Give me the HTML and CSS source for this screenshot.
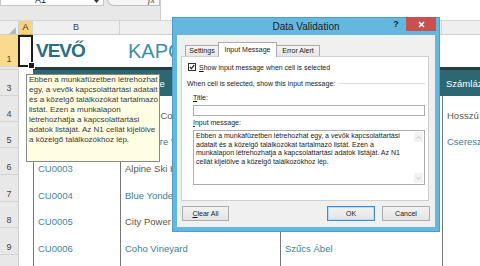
FILE: index.html
```html
<!DOCTYPE html>
<html lang="hu">
<head>
    <meta charset="UTF-8">
    <title>Data Validation</title>
    <link rel="stylesheet" href="styles.css">
</head>
<body>
<div class="app">

    <!-- Formula bar -->
    <div class="formula-bar">
        <div class="fb-left">
            <div class="fb-strip">
                <div class="name-box">
                    <span class="name">A1</span>
                    <svg class="caret" width="5" height="3" viewBox="0 0 5 3"><polygon points="0,0 5,0 2.5,3" fill="#333"/></svg>
                </div>
                <div class="fx-box"><span>fx</span></div>
            </div>
        </div>
        <div class="fb-input"></div>
    </div>

    <!-- Sheet -->
    <div class="sheet">
        <div class="row heads">
            <div class="corner"><svg width="7" height="7" viewBox="0 0 7 7"><polygon points="7,0 7,7 0,7" fill="#b8b8b8"/></svg></div>
            <div class="ch sel">A</div>
            <div class="ch">B</div>
            <div class="ch">C</div>
            <div class="ch">D</div>
            <div class="ch">E</div>
        </div>

        <div class="row r1">
            <div class="rh sel">1</div>
            <div class="cell a1"></div>
            <div class="cell title-main">VEVŐ</div>
            <div class="cell title-sub">KAPCSOLATTARTÓK</div>
            <div class="cell"></div>
            <div class="cell"></div>
        </div>

        <div class="row r2">
            <div class="rh"></div>
            <div class="cell"></div>
            <div class="cell band"></div>
            <div class="cell band"></div>
            <div class="cell band"></div>
            <div class="cell band"></div>
        </div>

        <div class="row r3">
            <div class="rh">3</div>
            <div class="cell"></div>
            <div class="cell th">Ügyfél-azonosító</div>
            <div class="cell th">Cég neve</div>
            <div class="cell th">Kapcsolattartó</div>
            <div class="cell th">Számlázási cím</div>
        </div>

        <div class="row data even">
            <div class="rh">4</div>
            <div class="cell"></div>
            <div class="cell">CU0001</div>
            <div class="cell">Adatum Corporation</div>
            <div class="cell">Kovács Anna</div>
            <div class="cell">Hosszú utca 12.</div>
        </div>
        <div class="row data odd">
            <div class="rh">5</div>
            <div class="cell"></div>
            <div class="cell">CU0002</div>
            <div class="cell">Adventure Works</div>
            <div class="cell">Nagy Péter</div>
            <div class="cell">Cseresznyés u. 4.</div>
        </div>
        <div class="row data even tall">
            <div class="rh">6</div>
            <div class="cell"></div>
            <div class="cell">CU0003</div>
            <div class="cell">Alpine Ski House</div>
            <div class="cell">Tóth Eszter</div>
            <div class="cell"></div>
        </div>
        <div class="row data odd tall">
            <div class="rh">7</div>
            <div class="cell"></div>
            <div class="cell">CU0004</div>
            <div class="cell">Blue Yonder Airlines</div>
            <div class="cell">Szabó Gábor</div>
            <div class="cell"></div>
        </div>
        <div class="row data even">
            <div class="rh">8</div>
            <div class="cell"></div>
            <div class="cell">CU0005</div>
            <div class="cell">City Power &amp; Light</div>
            <div class="cell">Varga Júlia</div>
            <div class="cell"></div>
        </div>
        <div class="row data odd tall">
            <div class="rh">9</div>
            <div class="cell"></div>
            <div class="cell">CU0006</div>
            <div class="cell">Coho Vineyard</div>
            <div class="cell">Szűcs Ábel</div>
            <div class="cell"></div>
        </div>
        <div class="row data even tall">
            <div class="rh">10</div>
            <div class="cell"></div>
            <div class="cell"></div>
            <div class="cell"></div>
            <div class="cell"></div>
            <div class="cell"></div>
        </div>
    </div>

    <!-- Input message tooltip for A1 -->
    <div class="tooltip">
        Ebben a munkafüzetben létrehozhat<br>
        egy, a vevők kapcsolattartási adatait<br>
        és a közelgő találkozókat tartalmazó<br>
        listát. Ezen a munkalapon<br>
        létrehozhatja a kapcsolattartási<br>
        adatok listáját. Az N1 cellát kijelölve<br>
        a közelgő találkozókhoz lép.
    </div>

    <!-- Data Validation dialog -->
    <div class="dialog">
        <div class="dlg-title">
            <span>Data Validation</span>
            <div class="dlg-ctrls">
                <span class="help">?</span>
                <span class="close">
                    <svg width="7" height="7" viewBox="0 0 7 7"><path d="M1 1 L6 6 M6 1 L1 6" stroke="#fff" stroke-width="1.6"/></svg>
                </span>
            </div>
        </div>

        <div class="dlg-body">
            <div class="tabs">
                <div class="tab tab-settings">Settings</div>
                <div class="tab tab-input active">Input Message</div>
                <div class="tab tab-error">Error Alert</div>
            </div>

            <div class="panel">
                <div class="check-row">
                    <span class="checkbox">
                        <svg width="6" height="6" viewBox="0 0 6 6"><path d="M0.8 3 L2.4 4.6 L5.3 1" fill="none" stroke="#222" stroke-width="1.2"/></svg>
                    </span>
                    <span><u>S</u>how input message when cell is selected</span>
                </div>

                <div class="group-row">
                    <span>When cell is selected, show this input message:</span>
                    <span class="group-line"></span>
                </div>

                <div class="field-label"><u>T</u>itle:</div>
                <div class="field-input"></div>

                <div class="field-label"><u>I</u>nput message:</div>
                <div class="field-area">
                    <div class="area-text">
                        Ebben a munkafüzetben létrehozhat egy, a vevők kapcsolattartási<br>
                        adatait és a közelgő találkozókat tartalmazó listát. Ezen a<br>
                        munkalapon létrehozhatja a kapcsolattartási adatok listáját. Az N1<br>
                        cellát kijelölve a közelgő találkozókhoz lép.
                    </div>
                    <div class="scrollbar">
                        <span class="arrow"><svg width="5" height="3" viewBox="0 0 5 3"><path d="M0.5 2.7 L2.5 0.7 L4.5 2.7" fill="none" stroke="#bdbdbd" stroke-width="0.9"/></svg></span>
                        <span class="arrow"><svg width="5" height="3" viewBox="0 0 5 3"><path d="M0.5 0.3 L2.5 2.3 L4.5 0.3" fill="none" stroke="#bdbdbd" stroke-width="0.9"/></svg></span>
                    </div>
                </div>
            </div>

            <div class="buttons">
                <div class="btn"><u>C</u>lear All</div>
                <div class="btn default">OK</div>
                <div class="btn">Cancel</div>
            </div>
        </div>
    </div>

</div>
</body>
</html>
```

FILE: styles.css
```css
/* Reset */
* {
    margin: 0;
    padding: 0;
    box-sizing: border-box;
}

body {
    font-family: "Liberation Sans", Arial, sans-serif;
    background-color: #fff;
    color: #222;
    overflow: hidden;
}

.app {
    position: relative;
    width: 480px;
    height: 266px;
    overflow: hidden;
}

/* Formula bar */
.formula-bar {
    display: flex;
    height: 21px;
    border-bottom: 1px solid #d6d6d6;
}

.fb-left {
    width: 161px;
    background-color: #e8e8e8;
    border-right: 1px solid #cacaca;
}

.fb-strip {
    display: flex;
    align-items: flex-end;
    height: 6px;
    overflow: hidden;
}

.name-box {
    display: flex;
    align-items: flex-end;
    width: 104px;
    height: 18px;
    background-color: #fff;
    border: 1px solid #c6c6c6;
    border-top: none;
    font-size: 9px;
    line-height: 10px;
    color: #222;
}

.name {
    flex: 1;
    text-align: center;
    padding-right: 14px;
}

.caret {
    margin: 0 4px 2px 0;
}

.fx-box {
    flex: 1;
    height: 18px;
    margin-left: 3px;
    display: flex;
    align-items: flex-end;
    justify-content: flex-end;
    padding: 0 4px 0 0;
    background-color: #f6f6f6;
    border: 1px solid #bdbdbd;
    border-top: none;
    border-radius: 0 0 0 7px;
    font-family: "Liberation Serif", serif;
    font-style: italic;
    font-size: 10px;
    line-height: 10px;
    color: #555;
}

.fb-input {
    flex: 1;
    background-color: #fff;
}

/* Sheet grid */
.sheet {
    width: 600px;
}

.row {
    display: grid;
    grid-template-columns: 19px 14px 87px 160px 162px 158px;
    height: 26px;
}

.row.tall {
    height: 27px;
}

.heads {
    height: 14px;
    background-color: #efefef;
    border-bottom: 1px solid #cfcfcf;
}

.corner {
    display: flex;
    align-items: flex-end;
    justify-content: flex-end;
    padding: 0 2px 1px 0;
    border-right: 1px solid #cfcfcf;
}

.ch {
    border-right: 1px solid #d3d3d3;
    font-size: 9px;
    line-height: 13px;
    text-align: center;
    color: #444;
}

.ch.sel {
    background-color: #f8d27c;
    border-bottom: 1px solid #e2a53d;
    color: #333;
}

.rh {
    display: flex;
    align-items: flex-end;
    justify-content: center;
    padding-bottom: 1px;
    background-color: #e8e8e8;
    border-right: 1px solid #cfcfcf;
    border-bottom: 1px solid #d4d4d4;
    font-size: 9px;
    line-height: 11px;
    color: #444;
}

.rh.sel {
    background-color: #f9da8f;
    border-right-color: #e2a53d;
}

.cell {
    display: flex;
    align-items: flex-end;
    padding: 0 0 1px 4px;
    font-size: 9.5px;
    line-height: 11px;
    white-space: nowrap;
}

/* Row 1: title */
.r1 {
    height: 32px;
}

.a1 {
    position: relative;
    border: 2px solid #1d1d1d;
    margin-left: -1px;
}

.a1::after {
    content: "";
    position: absolute;
    right: -4px;
    bottom: -4px;
    width: 5px;
    height: 5px;
    background-color: #1d1d1d;
    border: 1px solid #fff;
}

.title-main {
    padding: 0 0 6px 3px;
    font-size: 19px;
    line-height: 20px;
    font-weight: bold;
    letter-spacing: -1px;
    color: #2b6e7f;
}

.title-sub {
    padding: 0 0 6px 8px;
    font-size: 20px;
    line-height: 20px;
    color: #3a90a3;
}

/* Row 2 + header row */
.r2 {
    height: 3px;
}

.band {
    background-color: #243d43;
}

.th {
    align-items: center;
    padding-bottom: 0;
    background-color: #2d6872;
    color: #fff;
}

/* Data rows */
.data .cell:nth-child(n+3) {
    border-left: 1px solid #777;
}

.data .cell:nth-child(3) {
    color: #4585a0;
}

.data.even .cell:nth-child(n+4) {
    color: #5d5848;
}

.data.odd .cell:nth-child(n+4) {
    color: #3c7f97;
}

/* Tooltip */
.tooltip {
    position: absolute;
    left: 26px;
    top: 74px;
    width: 134px;
    height: 88px;
    padding: 0 2px;
    background-color: #fffde2;
    border: 1px solid #8a8a8a;
    font-size: 8px;
    line-height: 10px;
    white-space: nowrap;
    color: #3a3a3a;
}

/* Dialog */
.dialog {
    position: absolute;
    left: 172px;
    top: 17px;
    width: 268px;
    height: 215px;
    display: flex;
    flex-direction: column;
    padding: 0 4px 4px;
    background-color: #64b7de;
    border: 1px solid #4b9fcf;
}

.dlg-title {
    height: 17px;
    display: flex;
    align-items: center;
    justify-content: center;
    font-size: 10px;
    color: #1e1e1e;
}

.dlg-ctrls {
    position: absolute;
    top: -1px;
    right: 3px;
    display: flex;
}

.help {
    width: 18px;
    margin-right: 1px;
    text-align: center;
    font-size: 9px;
    font-weight: bold;
    line-height: 14px;
    color: #1e1e1e;
}

.close {
    display: flex;
    align-items: center;
    justify-content: center;
    width: 30px;
    height: 14px;
    background-color: #c75151;
}

.dlg-body {
    flex: 1;
    display: flex;
    flex-direction: column;
    padding: 7px 6px 6px 4px;
    background-color: #f0f0f0;
    font-size: 7px;
    color: #1a1a1a;
}

.tabs {
    display: flex;
    align-items: flex-end;
    height: 15px;
    margin-bottom: -1px;
    padding-left: 4px;
    position: relative;
    z-index: 1;
}

.tab {
    height: 11px;
    margin-bottom: 1px;
    line-height: 10px;
    text-align: center;
    background: linear-gradient(#f4f4f4, #e6e6e6);
    border: 1px solid #acacac;
    border-bottom: none;
}

.tab-settings {
    width: 33px;
    border-right: none;
}

.tab-input {
    width: 59px;
}

.tab-error {
    width: 43px;
    border-left: none;
}

.tab.active {
    height: 15px;
    margin-bottom: 0;
    padding-top: 2px;
    background: #fff;
}

.panel {
    height: 145px;
    display: flex;
    flex-direction: column;
    padding: 6px 3px 0 5px;
    background-color: #fff;
    border: 1px solid #cfcfcf;
}

.check-row {
    display: flex;
    align-items: center;
    gap: 3px;
    height: 8px;
    margin-left: 1px;
}

.checkbox {
    display: flex;
    align-items: center;
    justify-content: center;
    width: 8px;
    height: 8px;
    border: 1px solid #333;
    background-color: #fff;
}

.group-row {
    display: flex;
    align-items: center;
    height: 8px;
    margin-top: 8px;
}

.group-line {
    flex: 1;
    margin-left: 4px;
    border-top: 1px solid #dcdcdc;
}

.field-label {
    height: 8px;
    line-height: 8px;
    margin: 7px 0 0 6px;
}

.field-label + .field-input,
.field-label + .field-area {
    margin-top: 3px;
}

.field-input {
    height: 11px;
    margin-left: 6px;
    border: 1px solid #abadb3;
    background-color: #fff;
}

.field-input + .field-label {
    margin-top: 3px;
}

.field-area {
    display: flex;
    height: 55px;
    margin-left: 6px;
    border: 1px solid #abadb3;
    background-color: #fff;
}

.area-text {
    flex: 1;
    padding: 1px 0 0 2px;
    line-height: 8.5px;
    white-space: nowrap;
    overflow: hidden;
}

.scrollbar {
    width: 11px;
    display: flex;
    flex-direction: column;
    justify-content: space-between;
    padding: 1px;
}

.arrow {
    display: flex;
    align-items: center;
    justify-content: center;
    height: 10px;
    background-color: #f2f2f2;
}

.buttons {
    display: flex;
    gap: 7px;
    height: 15px;
    margin: 5px -1px 0 1px;
}

.btn {
    width: 48px;
    line-height: 13px;
    text-align: center;
    background: linear-gradient(#f2f2f2, #e4e4e4);
    border: 1px solid #acacac;
}

.btn:first-child {
    width: 47px;
    margin-right: auto;
}

.btn.default {
    border-color: #3d8ed0;
    box-shadow: inset 0 0 0 1px #b5dbf7;
}
```
